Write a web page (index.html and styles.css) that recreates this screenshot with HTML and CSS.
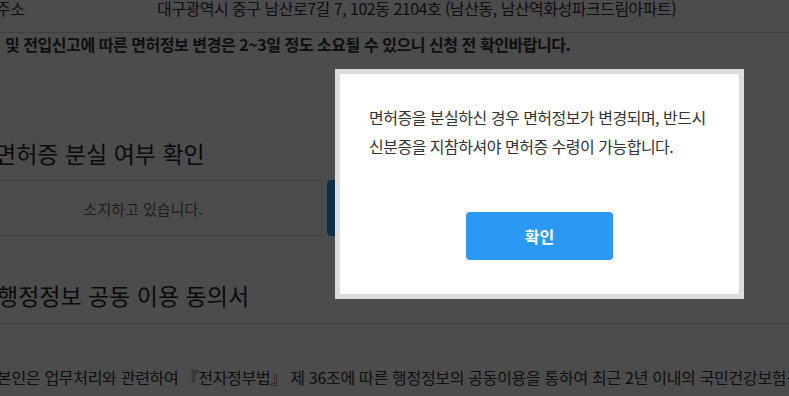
FILE: index.html
```html
<!DOCTYPE html>
<html lang="ko">
<head>
    <meta charset="UTF-8">
    <meta name="viewport" content="width=device-width, initial-scale=1.0">
    <title>면허증 재발급 신청</title>
    <link rel="stylesheet" href="styles.css">
</head>
<body>
    <div class="page">
        <div class="info-row">
            <div class="info-label">주소</div>
            <div class="info-value">대구광역시 중구 남산로7길 7, 102동 2104호 (남산동, 남산역화성파크드림아파트)</div>
        </div>
        <p class="notice">및 전입신고에 따른 면허정보 변경은 2~3일 정도 소요될 수 있으니 신청 전 확인바랍니다.</p>

        <section class="section">
            <h2 class="section-title">면허증 분실 여부 확인</h2>
            <div class="choice-group">
                <button class="choice">소지하고 있습니다.</button>
                <button class="choice active">분실하였습니다.</button>
            </div>
        </section>

        <section class="section agree">
            <h2 class="section-title">행정정보 공동 이용 동의서</h2>
            <p class="agree-text">본인은 업무처리와 관련하여 『전자정부법』 제 36조에 따른 행정정보의 공동이용을 통하여 최근 2년 이내의 국민건강보험공단 자격득실확인서를 확인하는 것에 동의합니다.</p>
        </section>
    </div>

    <div class="overlay"></div>
    <div class="modal">
        <div class="modal-content">
            <p class="modal-text">면허증을 분실하신 경우 면허정보가 변경되며, 반드시<br>신분증을 지참하셔야 면허증 수령이 가능합니다.</p>
            <div class="modal-actions">
                <button class="btn-confirm">확인</button>
            </div>
        </div>
    </div>
</body>
</html>
```

FILE: styles.css
```css
:root {
    --text-color: #333;
    --line-color: #d2d2d2;
    --blue: #2b98f4;
}

* {
    margin: 0;
    padding: 0;
    box-sizing: border-box;
}

body {
    font-family: 'Noto Sans CJK KR', 'Noto Sans', sans-serif;
    color: var(--text-color);
    background: #fff;
    overflow: hidden;
}

.page {
    width: 1100px;
    margin-top: -17px;
}

/* Address row */
.info-row {
    display: flex;
    height: 50px;
    align-items: center;
    border-bottom: 1px solid var(--line-color);
    font-size: 16px;
    letter-spacing: -0.5px;
}

.info-label {
    width: 125px;
    height: 100%;
    display: flex;
    align-items: center;
    margin-left: -4px;
}

.info-value {
    padding-left: 36px;
}

.notice {
    font-size: 16px;
    font-weight: 700;
    letter-spacing: -0.45px;
    padding: 0 0 0 5px;
    line-height: 22px;
}

/* Sections */
.section-title {
    font-size: 23px;
    font-weight: 400;
    color: #222;
    margin-left: -5px;
    line-height: 30px;
}

.section {
    padding-top: 83px;
}

.choice-group {
    display: flex;
    gap: 5px;
    margin-top: 12px;
    margin-left: -36px;
}

.choice {
    width: 358px;
    height: 56px;
    border: 1px solid var(--line-color);
    border-radius: 4px;
    background: #fff;
    color: #666;
    font-family: inherit;
    font-size: 15px;
}

.choice.active {
    background: var(--blue);
    border-color: var(--blue);
    color: #fff;
}

.agree {
    padding-top: 44px;
}

.agree .section-title {
    margin-left: -3px;
    padding-bottom: 13px;
    border-bottom: 1px solid var(--line-color);
}

.agree-text {
    font-size: 16px;
    letter-spacing: -0.3px;
    margin-left: -3px;
    margin-top: 41px;
    white-space: nowrap;
}

/* Modal */
.overlay {
    position: fixed;
    left: 0;
    top: 0;
    width: 100%;
    height: 100%;
    background: rgba(0, 0, 0, 0.7);
}

.modal {
    position: fixed;
    left: 335px;
    top: 69px;
    width: 409px;
    border: 5px solid #ddd;
    background: #fff;
}

.modal-content {
    padding: 29px 29px 34px;
}

.modal-text {
    font-size: 16px;
    line-height: 29px;
    letter-spacing: -0.5px;
    color: #333;
}

.modal-actions {
    display: flex;
    justify-content: center;
    margin-top: 51px;
}

.btn-confirm {
    width: 147px;
    height: 48px;
    border: none;
    border-radius: 4px;
    background: var(--blue);
    color: #fff;
    font-family: inherit;
    font-size: 16px;
    font-weight: 700;
}
```
